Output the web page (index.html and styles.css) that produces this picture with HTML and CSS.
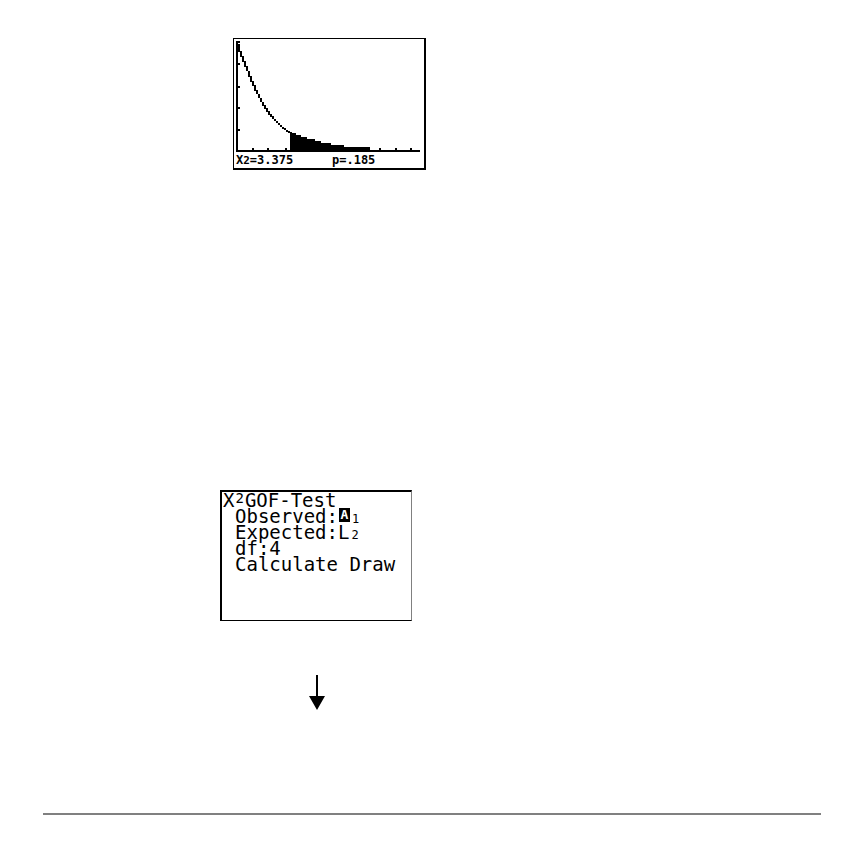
FILE: index.html
```html
<!DOCTYPE html>
<html lang="en">
<head>
<meta charset="utf-8">
<title>χ² GOF-Test</title>
<link rel="stylesheet" href="styles.css">
</head>
<body>
<main class="page">
  <figure class="screen graph">
    <svg class="plot" viewBox="0 0 190 114" shape-rendering="crispEdges" aria-hidden="true">
      <path d="M2 2h2v109h182v2H2z"/>
      <path d="M4 2h2v2H4zM4 24h2v2H4zM4 47h2v2H4zM4 68h2v2H4zM4 90h2v2H4zM18 109h2v2h-2zM33 109h2v2h-2zM51 109h2v2h-2zM145 109h2v2h-2zM161 109h2v2h-2zM176 109h2v2h-2z"/>
      <path fill="none" stroke="#000" stroke-width="2" d="M5 5v8M7 12v6M9 17v6M11 22v6M13 27v5M15 32v6M17 37v6M19 42v5M21 46v6M23 51v4M25 55v4M27 59v4M29 63v4M31 66v4M33 69v4M35 72v4M37 75v3M39 77v3M41 80v2M43 82v2M45 84v2M47 86v2M49 88v2M51 89v2M53 91v2M55 92v2"/>
      <path d="M56 93h2v1h4v2h5v2h6v2h8v2h6v2h10v2h13v2h26v2v2H56z"/>
    </svg>
    <figcaption class="stats"><span>X<small>2</small>=3.375</span><span>p=.185</span></figcaption>
  </figure>
  <section class="screen form">
    <h1 class="title">X<sup>2</sup>GOF-Test</h1>
    <p>Observed:<span class="cursor">A</span><sub>1</sub></p>
    <p>Expected:L<sub>2</sub></p>
    <p>df:4</p>
    <p>Calculate Draw</p>
  </section>
  <svg class="arrow" viewBox="0 0 16 35" aria-hidden="true">
    <path d="M7 0h2v21h7L8 35 0 21h7z"/>
  </svg>
  <hr class="rule">
</main>
</body>
</html>
```
FILE: styles.css
```css
* { box-sizing: border-box; }
body { margin: 0; background: #fff; color: #000; }
.page {
  display: flex;
  flex-direction: column;
  align-items: flex-start;
  padding: 38px 43px 48px;
}
.screen {
  width: 192px;
  min-height: 131px;
  border: 2px solid #000;
  font-family: "DejaVu Sans Mono", monospace;
}
.graph {
  width: 193px;
  min-height: 132px;
  margin: 0 0 0 190px;
  border-width: 1px 2px 2px 1px;
}
.plot { display: block; width: 190px; height: 114px; }
.stats {
  display: grid;
  grid-template-columns: 96px 1fr;
  padding-left: 2px;
  font-size: 12px;
  font-weight: bold;
  line-height: 14px;
}
.stats small { font-size: 11px; }
.form {
  margin: 320px 0 0 177px;
  border-width: 2px 1px 1px 2px;
  border-right-color: #808080;
  font-size: 19px;
  line-height: 16px;
}
.title { margin: 0; padding-left: 1px; font-size: 19px; font-weight: normal; line-height: 16px; }
.form p { margin: 0; padding-left: 13px; white-space: nowrap; }
sup, sub { font-size: 14px; line-height: 1px; }
sup { padding: 0 1px; vertical-align: 4px; }
sub { padding-left: 2px; vertical-align: 0; font-size: 12px; }
.cursor {
  display: inline-block;
  width: 11px;
  height: 14px;
  margin-left: 1px;
  line-height: 14px;
  text-align: center;
  vertical-align: top;
  background: #000;
  color: #fff;
  font-size: 13px;
  font-weight: bold;
}
.arrow { width: 16px; height: 35px; margin: 54px 0 0 266px; }
.rule {
  width: 100%;
  height: 2px;
  margin: 103px 0 0;
  border: 0;
  background: #808080;
}
```
